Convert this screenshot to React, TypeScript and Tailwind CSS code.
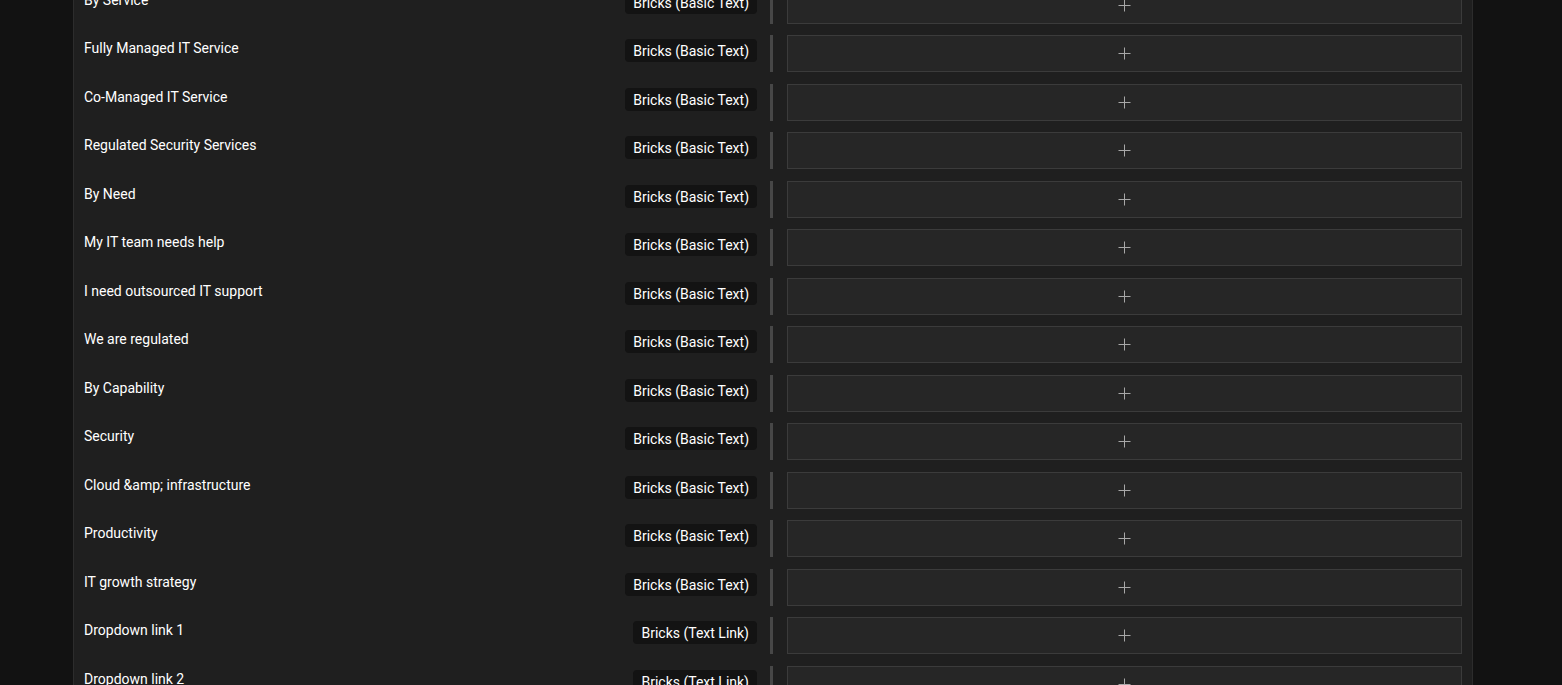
import React from 'react';

type Row = {
  label: string;
  source: string;
};

const rows: Row[] = [
  { label: 'By Service', source: 'Bricks (Basic Text)' },
  { label: 'Fully Managed IT Service', source: 'Bricks (Basic Text)' },
  { label: 'Co-Managed IT Service', source: 'Bricks (Basic Text)' },
  { label: 'Regulated Security Services', source: 'Bricks (Basic Text)' },
  { label: 'By Need', source: 'Bricks (Basic Text)' },
  { label: 'My IT team needs help', source: 'Bricks (Basic Text)' },
  { label: 'I need outsourced IT support', source: 'Bricks (Basic Text)' },
  { label: 'We are regulated', source: 'Bricks (Basic Text)' },
  { label: 'By Capability', source: 'Bricks (Basic Text)' },
  { label: 'Security', source: 'Bricks (Basic Text)' },
  { label: 'Cloud &amp; infrastructure', source: 'Bricks (Basic Text)' },
  { label: 'Productivity', source: 'Bricks (Basic Text)' },
  { label: 'IT growth strategy', source: 'Bricks (Basic Text)' },
  { label: 'Dropdown link 1', source: 'Bricks (Text Link)' },
  { label: 'Dropdown link 2', source: 'Bricks (Text Link)' },
];

function PlusIcon() {
  return (
    <svg width="13" height="13" viewBox="0 0 13 13" fill="none">
      <path d="M6.5 0.5v12M0.5 6.5h12" stroke="#a8a8a8" strokeWidth="1" />
    </svg>
  );
}

function TranslationRow({ row }: { row: Row }) {
  return (
    <div className="flex h-[48.5px] items-start border-l border-r border-[#2c2c2c]">
      {/* Original string */}
      <div className="flex-1 pl-[10px] pt-[9px] text-sm leading-5 text-white">{row.label}</div>

      {/* Source badge */}
      <div className="mt-[10px] flex h-[23px] items-center rounded-[4px] bg-[#131313] px-2 pt-px text-sm text-white">
        {row.source}
      </div>

      {/* Divider */}
      <div className="ml-[13px] mt-[6px] h-[37px] w-[3px] bg-[#474747]" />

      {/* Translation slot */}
      <button className="ml-[14px] mr-[10px] mt-[6px] flex h-[37px] w-[675px] items-center justify-center border border-[#3b3b3b] bg-[#262626]">
        <PlusIcon />
      </button>
    </div>
  );
}

export default function App() {
  return (
    <div
      className="h-[685px] overflow-hidden bg-[#121212]"
      style={{ fontFamily: 'Roboto, "Noto Sans", sans-serif' }}
    >
      <div className="-mt-[19.5px] ml-[73px] w-[1400px] bg-[#1f1f1f]">
        {rows.map((row) => (
          <TranslationRow key={row.label} row={row} />
        ))}
      </div>
    </div>
  );
}
